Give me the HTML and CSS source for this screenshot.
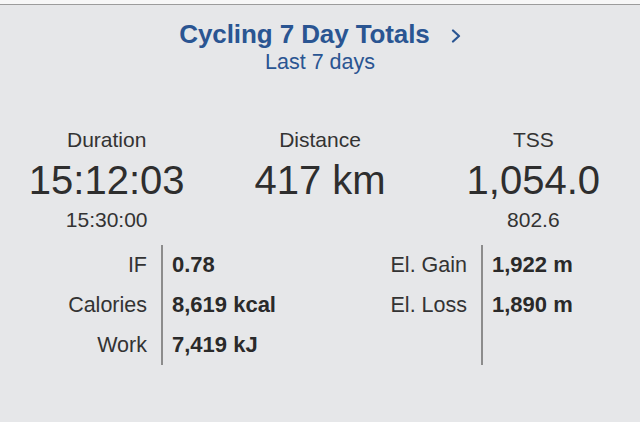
FILE: index.html
```html
<!DOCTYPE html>
<html>
<head>
<meta charset="utf-8">
<link rel="stylesheet" href="styles.css">
</head>
<body>
<div class="topbar"></div>
<header class="head">
  <div class="title-row">
    <span class="title">Cycling 7 Day Totals</span>
    <svg class="chev" width="10" height="14" viewBox="0 0 10 14"><polyline points="2,1.5 8,7 2,12.5" fill="none" stroke="#2a5592" stroke-width="2.2" stroke-linecap="round" stroke-linejoin="round"/></svg>
  </div>
  <div class="subtitle">Last 7 days</div>
</header>
<section class="stats">
  <div class="stat">
    <div class="label">Duration</div>
    <div class="big">15:12:03</div>
    <div class="small">15:30:00</div>
  </div>
  <div class="stat">
    <div class="label">Distance</div>
    <div class="big">417 km</div>
    <div class="small"></div>
  </div>
  <div class="stat">
    <div class="label">TSS</div>
    <div class="big">1,054.0</div>
    <div class="small">802.6</div>
  </div>
</section>
<section class="table">
  <div class="half">
    <div class="keys">
      <div class="row">IF</div>
      <div class="row">Calories</div>
      <div class="row">Work</div>
    </div>
    <div class="vals">
      <div class="row">0.78</div>
      <div class="row">8,619 kcal</div>
      <div class="row">7,419 kJ</div>
    </div>
  </div>
  <div class="half">
    <div class="keys">
      <div class="row">El. Gain</div>
      <div class="row">El. Loss</div>
    </div>
    <div class="vals">
      <div class="row">1,922 m</div>
      <div class="row">1,890 m</div>
    </div>
  </div>
</section>
</body>
</html>
```
FILE: styles.css
```css
* { box-sizing: border-box; }
html, body {
  margin: 0;
  padding: 0;
  background: #e6e7e9;
  font-family: "Liberation Sans", Arial, sans-serif;
  color: #333;
  width: 640px;
  height: 422px;
  overflow: hidden;
}
.topbar {
  height: 5px;
  background: #f7f7f7;
  border-bottom: 1px solid #9c9c9c;
}
.head {
  padding-top: 14px;
  text-align: center;
  color: #2a5592;
}
.title-row {
  display: flex;
  justify-content: center;
  align-items: center;
  height: 30px;
}
.title {
  font-size: 26px;
  font-weight: 700;
  line-height: 30px;
  letter-spacing: -0.1px;
}
.chev {
  margin-left: 21px;
  margin-top: 3px;
}
.subtitle {
  font-size: 21.5px;
  line-height: 26px;
}
.stats {
  display: grid;
  grid-template-columns: repeat(3, 1fr);
  margin-top: 52px;
  text-align: center;
}
.label {
  font-size: 21px;
  line-height: 26px;
}
.big {
  font-size: 40px;
  line-height: 54px;
  color: #2e2e2e;
}
.small {
  font-size: 21px;
  line-height: 26px;
  height: 26px;
}
.table {
  display: grid;
  grid-template-columns: 1fr 1fr;
  margin-top: 12px;
}
.half {
  display: grid;
  grid-template-columns: 163px 1fr;
  min-height: 120px;
}
.keys {
  text-align: right;
  padding-right: 14px;
  border-right: 2px solid #8c8c8c;
  font-size: 21.5px;
}
.vals {
  padding-left: 9px;
  font-size: 22px;
  font-weight: 700;
  color: #2a2a2a;
}
.row {
  height: 40px;
  line-height: 40px;
}
```
